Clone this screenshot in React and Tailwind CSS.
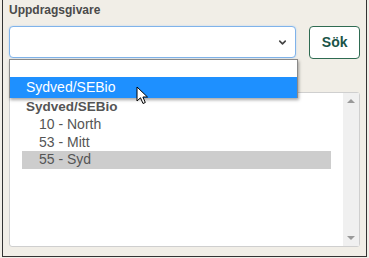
import { ChevronDown } from "lucide-react"

const options = ["10 - North", "53 - Mitt", "55 - Syd"]

function Cursor() {
    return (
        <svg width="13" height="20" viewBox="0 0 13 20" className="absolute left-[133px] top-[86px]">
            <path d="M1 1 L1 15 L4.5 11.8 L7 17.5 L9.3 16.5 L6.9 11 L11.5 11 Z" fill="#fff" stroke="#000" strokeWidth="1" strokeLinejoin="round" />
        </svg>
    )
}

export default function App() {
    return (
        <div className="w-[369px] h-[258px] bg-[#f1eee7] font-['Liberation_Sans',Arial,sans-serif]">
            <div className="relative ml-[2px] w-[365px] h-[257px] border-x border-b border-[#333] px-[6px]">
                <p className="pt-[3px] text-[12px] font-bold text-[#4a4a4a] leading-[15px]">Uppdragsgivare</p>

                <div className="flex items-start gap-[13px] mt-[8px]">
                    <div className="w-[289px] h-[32px] rounded-[4px] border border-[#80b3ea] bg-white shadow-[0_0_2px_#b8d4f3] flex items-center justify-end pr-[7px]">
                        <ChevronDown className="w-[11px] h-[11px] text-[#444]" strokeWidth={3.5} />
                    </div>
                    <button className="w-[51px] h-[33px] rounded-[4px] border border-[#2f6b52] bg-white text-[14px] font-bold text-[#1a5448]">
                        Sök
                    </button>
                </div>

                <div className="mt-[33px] h-[155px] rounded-[3px] border border-[#cfcfcf] bg-white flex">
                    <div className="flex-1 pl-[12px] pr-[12px] pt-[5px]">
                        <div className="h-[18px] pl-[4px] text-[13.5px] font-bold text-[#555] leading-[18px]">Sydved/SEBio</div>
                        {options.map((o, i) => (
                            <div
                                key={o}
                                className={`h-[17.5px] pl-[17px] text-[14px] text-[#555] leading-[17.5px] ${i === 2 ? "bg-[#cdcdcd]" : ""}`}
                            >
                                {o}
                            </div>
                        ))}
                    </div>
                    <div className="w-[16px] bg-[#f0f0f0] flex flex-col items-center justify-between py-[6px]">
                        <div className="w-0 h-0 border-x-[4px] border-x-transparent border-b-[4px] border-b-[#9a9a9a]" />
                        <div className="w-0 h-0 border-x-[4px] border-x-transparent border-t-[4px] border-t-[#9a9a9a]" />
                    </div>
                </div>

                <div className="absolute left-[6px] top-[59px] w-[289px] h-[39px] border border-[#8a8a8a] border-b-0 bg-white shadow-[1px_2px_3px_rgba(0,0,0,0.35)]">
                    <div className="h-[17px]" />
                    <div className="h-[21px] bg-[#1e90ff] pl-[16px] text-[14px] text-white leading-[21px]">Sydved/SEBio</div>
                </div>

                <Cursor />
            </div>
        </div>
    )
}
